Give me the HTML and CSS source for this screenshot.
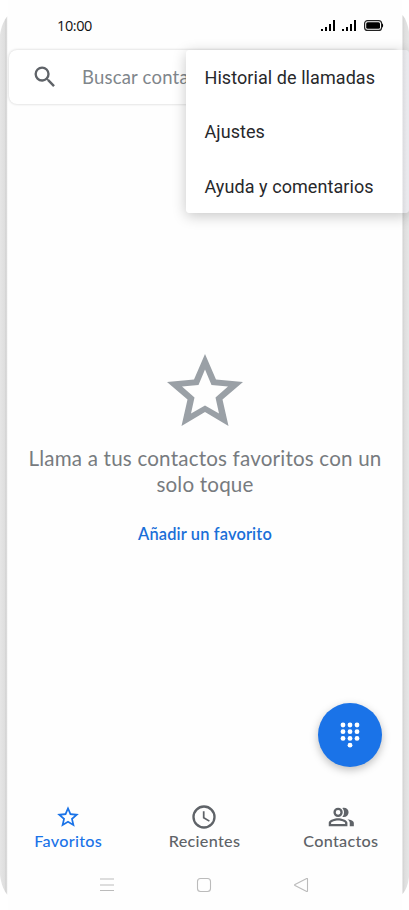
FILE: index.html
```html
<!DOCTYPE html>
<html lang="es">
<head>
<meta charset="utf-8">
<title>Teléfono</title>
<link rel="stylesheet" href="styles.css">
</head>
<body>
<div class="phone">
  <svg class="edge" viewBox="0 0 8 910" preserveAspectRatio="none"><defs><linearGradient id="l"><stop offset="0" stop-color="#e6e6e6"/><stop offset=".65" stop-color="#dedede"/><stop offset=".8" stop-color="#cfcfcf"/><stop offset="1" stop-color="#f0f0f0"/></linearGradient></defs><path fill="url(#l)" d="M7.500 16C4 20 1 27 0 35V875C1 884 4 891 7.500 895Z"/></svg>
  <div class="screen">
    <header class="status">
      <span class="time">10:00</span>
      <svg class="signals" width="64" height="14" viewBox="0 0 64 14"><path d="M0 10h2v2H0zM4 8h2v4H4zM8 5h2v7H8zM12 1h2v11h-2zM21 10h2v2h-2zM25 8h2v4h-2zM29 5h2v7h-2zM33 1h2v11h-2z"/><rect x="43.600" y="1.600" width="17" height="9.800" rx="3" fill="none" stroke="#222" stroke-width="1.200"/><rect x="45.200" y="3.200" width="13.800" height="6.600" rx="1.500"/><path d="M61 4.500c1.500.2 1.500 3.800 0 4z"/></svg>
    </header>
    <div class="search">
      <svg width="28" height="28" viewBox="0 0 24 24" fill="#5f6368"><path d="M15.500 14h-.79l-.28-.27A6.470 6.470 0 0 0 16 9.500 6.500 6.500 0 1 0 9.500 16c1.610 0 3.090-.59 4.230-1.570l.27.28v.79l5 4.990L20.490 19zM9.500 14A4.500 4.500 0 1 1 14 9.500 4.490 4.490 0 0 1 9.500 14z"/></svg>
      <span class="hint">Buscar conta</span>
    </div>
    <main class="empty">
      <svg width="76" height="72" viewBox="0 0 76 72"><path fill="#9aa0a6" fill-rule="evenodd" d="M38 0 49 25.500 76 28 55.500 45.500 61.500 72 38 58 14.500 72 20.500 45.500 0 28 27 25.500ZM38 15.500 31.500 31 15 32.500 27.500 43.500 24 59.500 38 51.500 52 59.500 48.500 43.500 61 32.500 44.500 31Z"/></svg>
      <p class="message">Llama a tus contactos favoritos con un<br>solo toque</p>
      <span class="add">Añadir un favorito</span>
    </main>
    <div class="fab-row"><div class="fab"><svg width="20" height="26" viewBox="0 0 20 26" fill="#fff"><circle cx="3" cy="3" r="2.400"/><circle cx="10" cy="3" r="2.400"/><circle cx="17" cy="3" r="2.400"/><circle cx="3" cy="9.700" r="2.400"/><circle cx="10" cy="9.700" r="2.400"/><circle cx="17" cy="9.700" r="2.400"/><circle cx="3" cy="16.400" r="2.400"/><circle cx="10" cy="16.400" r="2.400"/><circle cx="17" cy="16.400" r="2.400"/><circle cx="10" cy="23.200" r="2.400"/></svg></div></div>
    <nav class="tabs">
      <div class="tab active"><svg width="26" height="26" viewBox="0 0 24 24"><path d="m22 9.240-7.190-.62L12 2 9.190 8.630 2 9.240l5.460 4.730L5.820 21 12 17.270 18.180 21l-1.630-7.030zM12 15.400l-3.760 2.270 1-4.280-3.320-2.880 4.380-.38L12 6.100l1.710 4.040 4.380.38-3.320 2.880 1 4.280z"/></svg><span>Favoritos</span></div>
      <div class="tab"><svg width="28" height="28" viewBox="0 0 24 24"><path d="M12 2a10 10 0 1 0 0 20 10 10 0 0 0 0-20zm0 18a8 8 0 1 1 0-16 8 8 0 0 1 0 16zm.5-13H11v6l5.250 3.150.75-1.230-4.500-2.670z"/></svg><span>Recientes</span></div>
      <div class="tab"><svg width="28" height="28" viewBox="0 0 24 24"><path fill-rule="evenodd" d="M9.500 12a4 4 0 1 0 0-8 4 4 0 0 0 0 8zm0-6a2 2 0 1 1 0 4 2 2 0 0 1 0-4zM9.500 13c-2.670 0-8 1.340-8 4v3h16v-3c0-2.660-5.330-4-8-4zm6 5h-12v-.99c.2-.72 3.300-2.010 6-2.010s5.800 1.290 6 2zM14.500 12a4 4 0 1 0 0-8c-.47 0-.91.100-1.330.240a5.980 5.980 0 0 1 0 7.520c.42.140.86.240 1.330.240zM17.530 13.830C18.700 14.650 19.500 15.700 19.500 17v3h3.500v-3c0-1.750-2.700-2.800-5.470-3.170z"/></svg><span>Contactos</span></div>
    </nav>
    <footer class="system">
      <svg width="16" height="16" viewBox="0 0 16 16"><path d="M1 2h14M1 8h14M1 13.500h14"/></svg>
      <svg width="16" height="16" viewBox="0 0 16 16"><rect x="1.500" y="1.500" width="13" height="13" rx="3"/></svg>
      <svg width="16" height="16" viewBox="0 0 16 16"><path d="M14.500 2v12q0 .8-.8.400L2 8.600q-1-.600 0-1.200L13.700 1.600q.8-.4.800.4Z"/></svg>
    </footer>
  </div>
  <svg class="edge" viewBox="0 0 7 910" preserveAspectRatio="none"><defs><linearGradient id="r"><stop offset="0" stop-color="#d0d0d0"/><stop offset=".35" stop-color="#dedede"/><stop offset="1" stop-color="#e6e6e6"/></linearGradient></defs><path fill="url(#r)" d="M.5 15C4 19 6 25 7 32V877C6 885 4 890 .5 894Z"/></svg>
  <div class="menu"><span>Historial de llamadas</span><span>Ajustes</span><span>Ayuda y comentarios</span></div>
</div>
</body>
</html>
```
FILE: styles.css
```css
* { box-sizing: border-box; }
body { margin: 0; background: #fff; }
.phone { position: relative; display: grid; grid-template-columns: 8px 394px 7px; width: 409px; height: 910px; overflow: hidden; font-family: Lato, "Open Sans", sans-serif; color: #5f6368; }
.edge { width: 100%; height: 910px; display: block; }
.screen { display: flex; flex-direction: column; height: 910px; background: #fefefe; }
.status { height: 50px; padding: 19px 17px 0 49px; display: flex; justify-content: space-between; align-items: flex-start; }
.time { font: 14.5px/14px "Open Sans", sans-serif; letter-spacing: -.4px; color: #111; }
.search { height: 54px; margin: 0 1px; padding-left: 22px; display: flex; align-items: center; border-radius: 8px; background: #fff; box-shadow: 0 0 3px rgba(0,0,0,.2); }
.hint { margin-left: 23px; font-size: 18.5px; letter-spacing: .2px; color: #80868b; white-space: nowrap; }
.empty { height: 599px; padding-top: 250px; display: flex; flex-direction: column; align-items: center; }
.empty svg { margin-right: 1px; }
.message { margin: 19px 0 0; font-size: 20.6px; letter-spacing: .19px; line-height: 26px; color: #777b7f; text-align: center; white-space: nowrap; }
.add { margin-top: 27px; font-size: 16.4px; letter-spacing: .15px; line-height: 20px; font-weight: 600; color: #1a6fd8; white-space: nowrap; }
.fab-row { display: flex; justify-content: flex-end; padding-right: 20px; height: 98px; }
.fab { width: 64px; height: 64px; border-radius: 50%; background: #1a73e8; display: flex; align-items: center; justify-content: center; box-shadow: 0 3px 8px rgba(0,0,0,.26); }
.tabs { height: 68px; display: grid; grid-template-columns: repeat(3, 1fr); margin: 0 -7px 0 -8px; }
.tab { display: flex; flex-direction: column; align-items: center; font-size: 16.2px; letter-spacing: .3px; line-height: 20px; font-weight: 500; fill: #5f6368; padding-top: 2px; }
.tab svg { height: 28px; }
.tab.active { color: #1a73e8; fill: #1a73e8; }
.system { display: flex; justify-content: space-between; padding: 8px 93px 0 91px; }
.system svg { fill: none; stroke: #bbb; stroke-width: 1.1; }
.menu { position: absolute; left: 186px; top: 50px; width: 223px; height: 163px; border-radius: 4px; padding-left: 18.5px; display: grid; grid-template-rows: repeat(3, 54.6px); align-items: center; background: linear-gradient(90deg, #fff 216px, #dcdce0 217px, #e9e9ed 221px); box-shadow: 0 3px 14px rgba(0,0,0,.22); font: 18px Roboto, sans-serif; letter-spacing: .07px; color: #27282b; white-space: nowrap; }
```
